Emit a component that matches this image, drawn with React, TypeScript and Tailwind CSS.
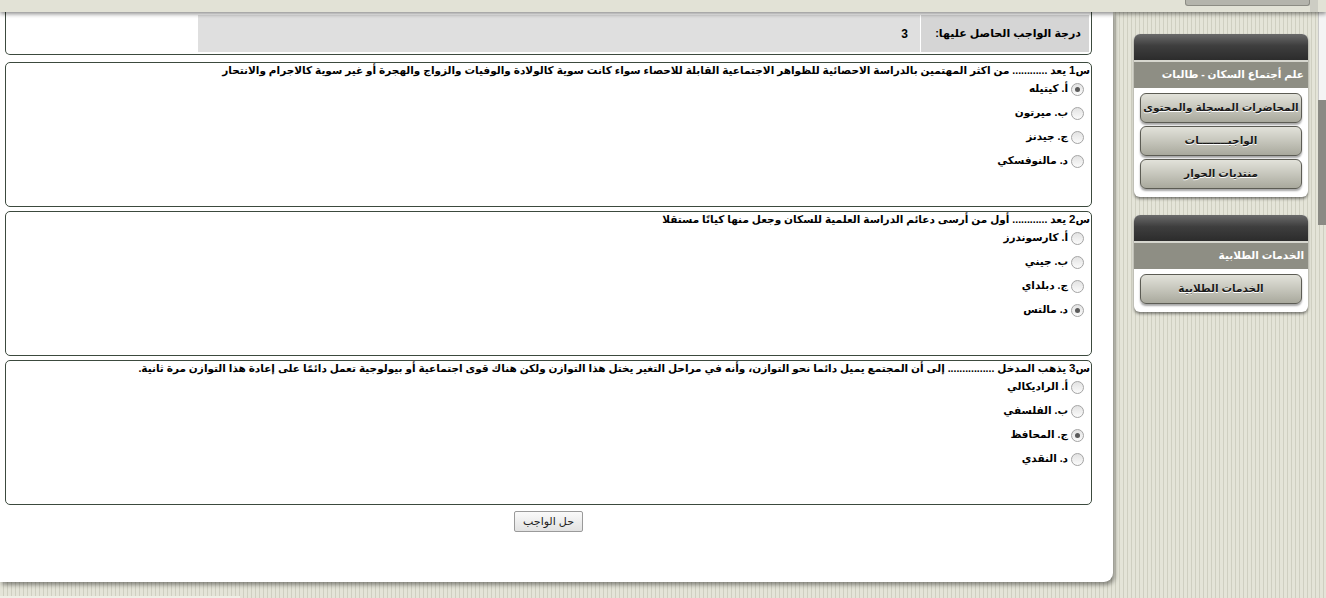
import React from 'react'

const stripes =
  'bg-[repeating-linear-gradient(90deg,#e4e4d8_0px,#e4e4d8_3px,#cfcfc1_3px,#cfcfc1_4px)]'

type Question = {
  num: string
  text: string
  options: string[]
  checked: number
}

const questions: Question[] = [
  {
    num: '1',
    text: 'يعد ............ من اكثر المهتمين بالدراسة الاحصائية للظواهر الاجتماعية القابلة للاحصاء سواء كانت سوية كالولادة والوفيات والزواج والهجرة أو غير سوية كالاجرام والانتحار',
    options: ['أ. كيتيله', 'ب. ميرتون', 'ج. جيدنز', 'د. مالنوفسكي'],
    checked: 0,
  },
  {
    num: '2',
    text: 'يعد ............ أول من أرسى دعائم الدراسة العلمية للسكان وجعل منها كيانًا مستقلا',
    options: ['أ. كارسوندرز', 'ب. جيني', 'ج. دبلداي', 'د. مالتس'],
    checked: 3,
  },
  {
    num: '3',
    text: 'يذهب المدخل ................ إلى أن المجتمع يميل دائما نحو التوازن، وأنه في مراحل التغير يختل هذا التوازن ولكن هناك قوى اجتماعية أو بيولوجية تعمل دائمًا على إعادة هذا التوازن مرة ثانية.',
    options: ['أ. الراديكالي', 'ب. الفلسفي', 'ج. المحافظ', 'د. النقدي'],
    checked: 2,
  },
]

const Radio: React.FC<{ on: boolean }> = ({ on }) => (
  <span className="w-[13px] h-[13px] rounded-full border border-[#a4a4a4] bg-[linear-gradient(180deg,#e2e2e2,#fbfbfb)] flex items-center justify-center shrink-0">
    {on && <span className="w-[5px] h-[5px] rounded-full bg-[#5a5a5a]" />}
  </span>
)

const QuestionBox: React.FC<{ q: Question }> = ({ q }) => (
  <div className="h-[145px] border border-[#3c4a3e] rounded-[5px] bg-white pr-[1px]">
    <div className="text-[10.5px] font-bold text-black leading-[14px] whitespace-nowrap">
      س<span className="text-[11.5px]">{q.num}</span> {q.text}
    </div>
    <div className="pr-[6px] flex flex-col">
      {q.options.map((o, i) => (
        <div key={o} className="h-[24px] flex items-center gap-[3px]">
          <Radio on={i === q.checked} />
          <span className="text-[10.5px] font-bold text-black">{o}</span>
        </div>
      ))}
    </div>
  </div>
)

const SideButton: React.FC<{ label: string }> = ({ label }) => (
  <div className="h-[30px] rounded-[6px] border border-[#5c5c54] bg-[linear-gradient(180deg,#e2e2da_0%,#c6c6bc_50%,#a9a99d_100%)] shadow-[0_2px_2px_rgba(0,0,0,0.35)] flex items-center justify-center whitespace-nowrap text-[10.5px] font-bold text-[#1a1a1a] [text-shadow:0_1px_0_#ffffff]">
    {label}
  </div>
)

const SidePanel: React.FC<{ title: string; buttons: string[] }> = ({ title, buttons }) => (
  <div dir="rtl" className="w-[174px] rounded-[6px] shadow-[0_2px_3px_rgba(0,0,0,0.45)] bg-white">
    <div className="h-[26px] rounded-t-[6px] bg-[linear-gradient(180deg,#6b6b6b_0%,#3e3e3e_45%,#2c2c2c_100%)]" />
    <div className="h-[2px] bg-[#d6d6ce]" />
    <div className="h-[26px] bg-[#8e8e84] flex items-center px-[4px] whitespace-nowrap text-[10.5px] font-bold text-white">
      {title}
    </div>
    <div className="px-[6px] pt-[5px] pb-[8px] flex flex-col gap-[3px]">
      {buttons.map((b) => (
        <SideButton key={b} label={b} />
      ))}
    </div>
  </div>
)

export default function App() {
  return (
    <div
      className={`w-[1326px] h-[598px] overflow-hidden flex flex-col ${stripes}`}
      style={{ fontFamily: '"Liberation Sans", "DejaVu Sans", sans-serif' }}
    >
      {/* top bar */}
      <div className="relative z-10 h-[12px] bg-[#e2e2d6] shadow-[0_2px_4px_rgba(0,0,0,0.45)] shrink-0">
        <div className="absolute left-[1185px] top-0 w-[125px] h-[6px] rounded-b-[3px] bg-[#b4b4ac] border border-t-0 border-[#8c8c84]" />
        <div className="absolute left-[1310px] top-0 w-[8px] h-[12px] bg-[#cdcdc4]" />
      </div>

      <div className="flex h-[570px] shrink-0">
        {/* main panel */}
        <div
          dir="rtl"
          className="w-[1113px] h-full bg-white rounded-br-[9px] shadow-[2px_3px_4px_rgba(0,0,0,0.4)] pl-[5px] pr-[21px] flex flex-col shrink-0"
        >
          <div className="h-[43px] border border-t-0 border-[#3c4a3e] rounded-b-[5px] flex pt-[3px] pb-[2px] px-[2px]">
            <div className="w-[168px] bg-[#d5d5d5] flex items-center px-[8px] whitespace-nowrap text-[11px] font-bold text-black">
              درجة الواجب الحاصل عليها:
            </div>
            <div className="w-[1px] bg-white" />
            <div className="w-[722px] bg-[#dfdfdf] flex items-center pr-[12px] text-[12px] font-bold text-black">
              3
            </div>
          </div>

          <div className="mt-[7px] flex flex-col gap-[4px]">
            {questions.map((q) => (
              <QuestionBox key={q.num} q={q} />
            ))}
          </div>

          <div className="mt-[6px] flex justify-center">
            <button className="h-[21px] px-[8px] border border-[#9a9a9a] rounded-[2px] bg-[linear-gradient(180deg,#fafafa,#e2e2e2)] text-[11px] text-[#222]">
              حل الواجب
            </button>
          </div>
        </div>

        {/* sidebar */}
        <div className="flex-1 flex">
          <div className="w-[174px] ml-[21px] pt-[22px] flex flex-col gap-[18px]">
            <SidePanel
              title="علم أجتماع السكان - طالبات"
              buttons={['المحاضرات المسجلة والمحتوى', 'الواجبــــــــات', 'منتديات الحوار']}
            />
            <SidePanel title="الخدمات الطلابية" buttons={['الخدمات الطلابية']} />
          </div>
          <div className="w-[8px] ml-auto flex flex-col">
            <div className="h-[88px] bg-[#f4f4f4] border-l border-[#c8c8c8]" />
            <div className="h-[125px] bg-[#8a8a84]" />
          </div>
        </div>
      </div>

      <div className="h-[16px] shrink-0 relative">
        <div className="absolute left-0 bottom-0 w-[240px] h-[2px] bg-[#efefe6]" />
      </div>
    </div>
  )
}
